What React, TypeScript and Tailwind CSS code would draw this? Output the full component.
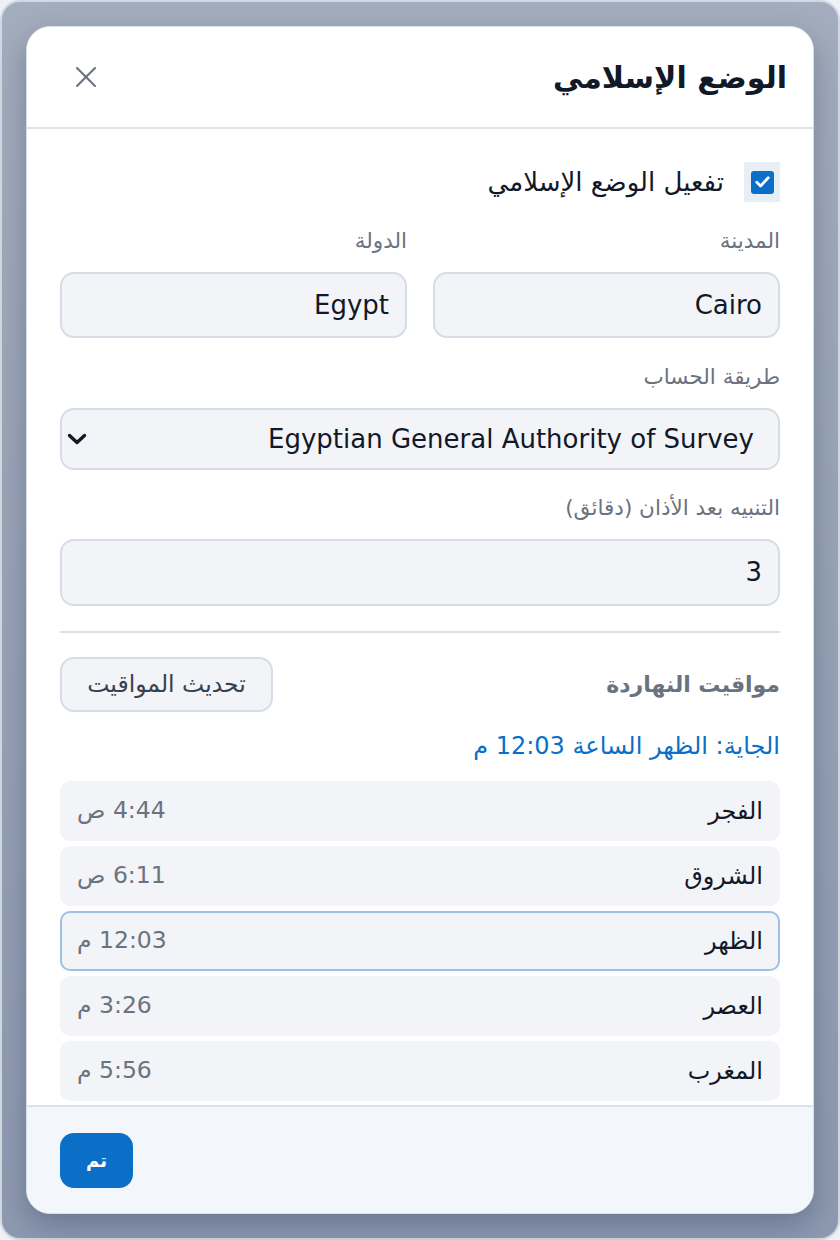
import { X } from "lucide-react"

const prayers = [
  { name: "الفجر", time: "4:44 ص" },
  { name: "الشروق", time: "6:11 ص" },
  { name: "الظهر", time: "12:03 م", next: true },
  { name: "العصر", time: "3:26 م" },
  { name: "المغرب", time: "5:56 م" },
  { name: "العشاء", time: "7:14 م" },
]

export default function App() {
  return (
    <div className="w-[840px] h-[1240px] bg-[#eef1f5] font-['DejaVu_Sans',sans-serif]">
      <div className="h-full rounded-[20px] border-2 border-[#d3d9e2] bg-gradient-to-b from-[#a3adbd] to-[#8e9ab0] p-[24px]">
        <div
          dir="rtl"
          className="h-[1188px] flex flex-col rounded-[24px] bg-white border border-[#d9dfe7] shadow-[0_12px_30px_rgba(40,55,85,0.35)] overflow-hidden"
        >
          {/* header */}
          <div className="h-[102px] shrink-0 flex items-center justify-between pr-[26px] pl-[41px] border-b-2 border-[#dde3ea]">
            <h1 className="text-[30px] font-bold text-[#111827]">الوضع الإسلامي</h1>
            <X size={36} strokeWidth={1.4} className="text-[#6b7280]" />
          </div>

          {/* body */}
          <div className="flex-1 overflow-hidden px-[33px] pt-[33px]">
            <div className="flex items-center gap-[20px] h-[40px]">
              <div className="w-[36px] h-[40px] bg-[#e8eef5] flex items-center justify-center">
                <div className="w-[23px] h-[23px] rounded-[3px] bg-[#0b6fc7] flex items-center justify-center">
                  <svg width="15" height="12" viewBox="0 0 15 12" fill="none">
                    <path d="M1.8 6.2 5.6 10 13.2 1.8" stroke="white" strokeWidth="2.8" strokeLinecap="round" strokeLinejoin="round" />
                  </svg>
                </div>
              </div>
              <span className="text-[26px] text-[#111827]">تفعيل الوضع الإسلامي</span>
            </div>

            <div className="grid grid-cols-2 gap-[26px] mt-[26px]">
              <div>
                <div className="text-[21.5px] leading-[26px] text-[#6b7280]">المدينة</div>
                <div className="mt-[18px] h-[66px] rounded-[14px] bg-[#f2f4f7] border-2 border-[#d6dde6] flex items-center px-[16px] text-[26px] text-[#111827]">
                  Cairo
                </div>
              </div>
              <div>
                <div className="text-[21.5px] leading-[26px] text-[#6b7280]">الدولة</div>
                <div className="mt-[18px] h-[66px] rounded-[14px] bg-[#f2f4f7] border-2 border-[#d6dde6] flex items-center px-[16px] text-[26px] text-[#111827]">
                  Egypt
                </div>
              </div>
            </div>

            <div className="mt-[26px] text-[21.5px] leading-[26px] text-[#6b7280]">طريقة الحساب</div>
            <div className="mt-[18px] h-[62px] rounded-[14px] bg-[#f2f4f7] border-2 border-[#d6dde6] flex items-center justify-between pr-[24px] pl-[5px]">
              <span className="text-[26px] text-[#111827]">Egyptian General Authority of Survey</span>
              <svg width="20" height="12" viewBox="0 0 20 12" fill="none">
                <path d="M2.5 2.5 10 9.5 17.5 2.5" stroke="#111827" strokeWidth="3.4" strokeLinecap="round" strokeLinejoin="round" />
              </svg>
            </div>

            <div className="mt-[25px] text-[21.5px] leading-[26px] text-[#6b7280]">التنبيه بعد الأذان (دقائق)</div>
            <div className="mt-[18px] h-[67px] rounded-[14px] bg-[#f2f4f7] border-2 border-[#d6dde6] flex items-center px-[16px] text-[26px] text-[#111827]">
              3
            </div>

            <div className="mt-[25px] h-[2px] bg-[#dde2e8]" />

            <div className="mt-[24px] flex items-center justify-between">
              <span className="text-[22px] font-bold text-[#6b7280]">مواقيت النهاردة</span>
              <button className="w-[213px] h-[55px] rounded-[14px] bg-[#f2f4f7] border-2 border-[#d6dde6] text-[23.5px] text-[#374151]">
                تحديث المواقيت
              </button>
            </div>

            <div className="mt-[19px] text-[24px] leading-[30px] text-[#0b6fc7]">الجاية: الظهر الساعة 12:03 م</div>

            <div className="mt-[20px] flex flex-col gap-[5px]">
              {prayers.map((p) => (
                <div
                  key={p.name}
                  className={`h-[60px] rounded-[10px] bg-[#f2f4f7] flex items-center justify-between px-[15px] border-2 ${
                    p.next ? "border-[#9fc0e3]" : "border-transparent"
                  }`}
                >
                  <span className="text-[24px] text-[#111827]">{p.name}</span>
                  <span className="text-[23.5px] text-[#6b7280]">{p.time}</span>
                </div>
              ))}
            </div>
          </div>

          {/* footer */}
          <div className="h-[108px] shrink-0 border-t-2 border-[#d9e1ea] bg-[#f3f6fb] flex items-center justify-end px-[33px]">
            <button className="w-[73px] h-[55px] rounded-[14px] bg-[#0b6fc7] text-white text-[18px] font-bold">تم</button>
          </div>
        </div>
      </div>
    </div>
  )
}
